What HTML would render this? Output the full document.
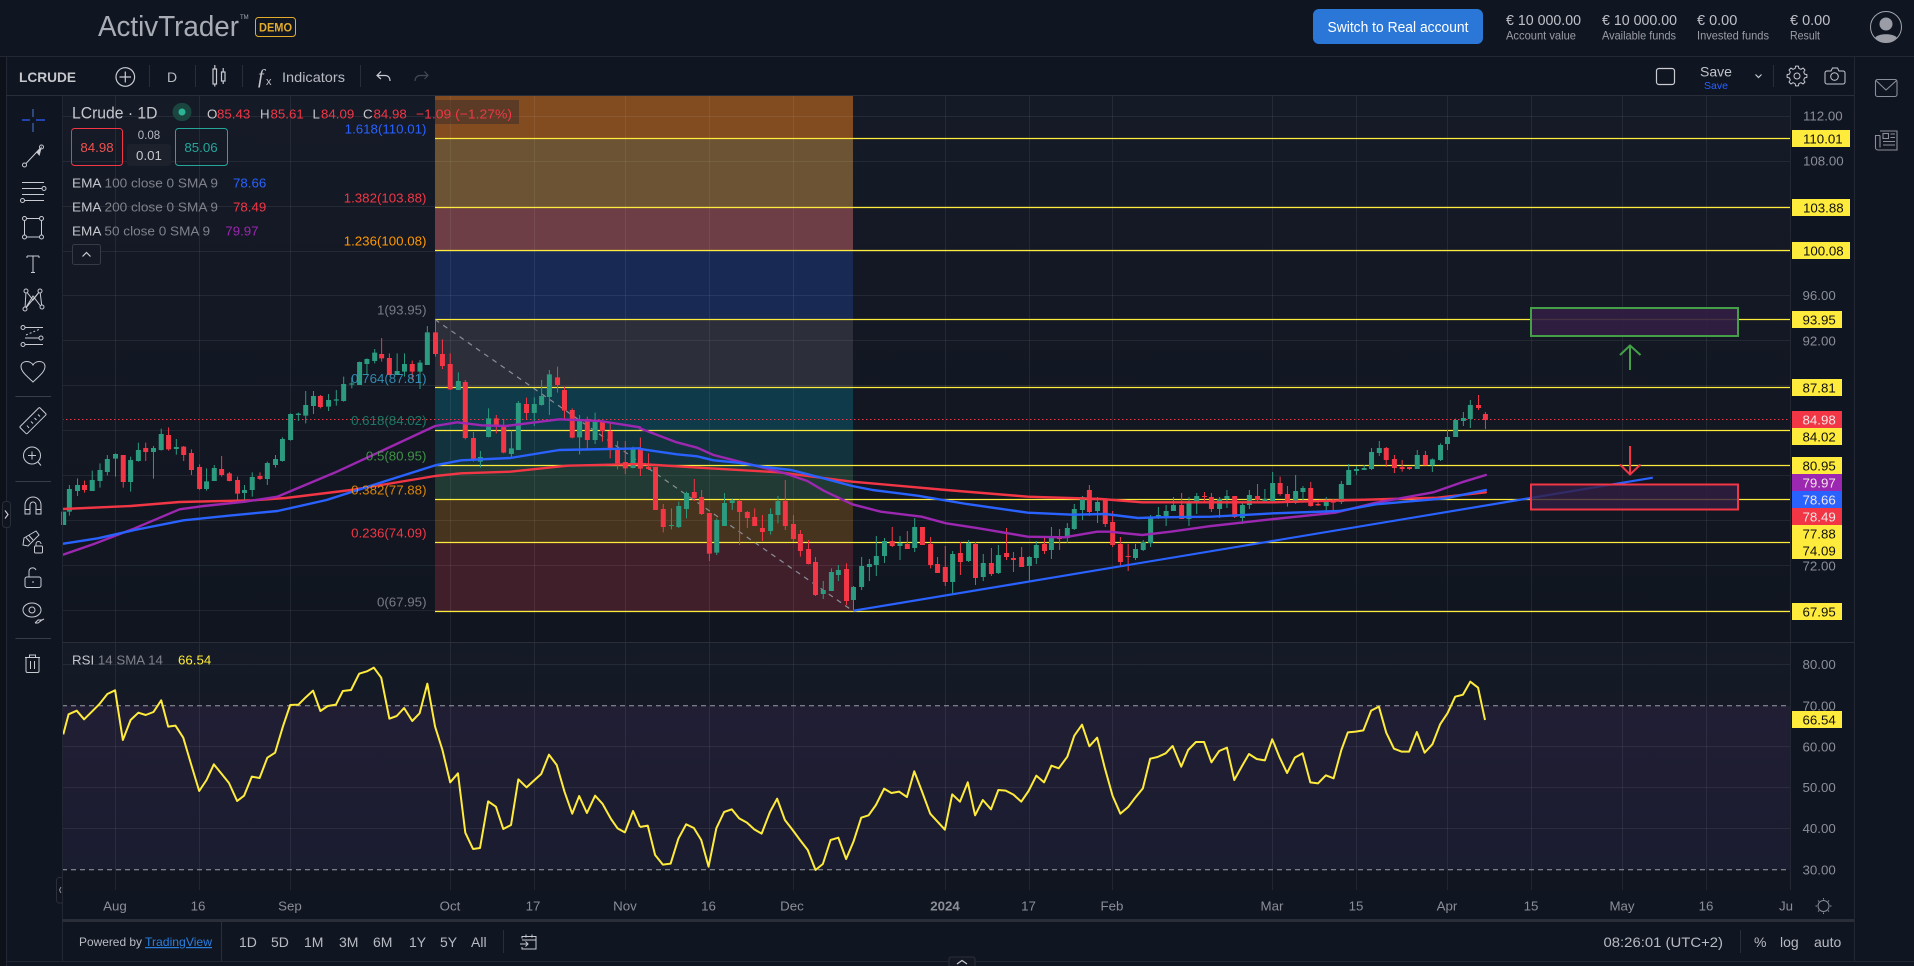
<!DOCTYPE html>
<html><head><meta charset="utf-8"><title>ActivTrader</title>
<style>
html,body{margin:0;padding:0;background:#101522;width:1914px;height:966px;overflow:hidden}
svg{display:block;font-family:"Liberation Sans",sans-serif;filter:blur(.3px)}
.n{vector-effect:non-scaling-stroke;fill:none}
.i{fill:none;stroke:#c9cbd1;stroke-width:1.2}
.ax{font-size:13.3px;fill:#8b8e97}
.t{font-size:13.3px;fill:#8b8e97;text-anchor:middle}
.fib{font-size:13.3px;text-anchor:end}
.lb{font-size:13.3px;fill:#111}
.lw{font-size:13.3px;fill:#f3e6e8}
.g{stroke:rgba(255,255,255,.07);stroke-width:1;fill:none}
.y{stroke:#ffeb3b;stroke-width:1.3;fill:none}
.tb{font-size:14px;fill:#b9bbc2}
.r{fill:#f23645}
.c{fill:#c5c7cc}
.gr{fill:#7f828b}
</style></head><body>
<svg width="1914" height="966" viewBox="0 0 1914 966" xmlns="http://www.w3.org/2000/svg">
<defs>
<linearGradient id="bg" x1="0" y1="0" x2="0" y2="1"><stop offset="0" stop-color="#151a27"/><stop offset="1" stop-color="#10151f"/></linearGradient>
<linearGradient id="rb" x1="0" y1="0" x2="0" y2="1"><stop offset="0" stop-color="#211e34"/><stop offset="1" stop-color="#1a1c30"/></linearGradient>
</defs>
<rect width="1914" height="966" fill="#101522"/>
<rect x="0" y="57" width="6.5" height="909" fill="#0d1119"/>
<rect x="62.5" y="95.5" width="1728" height="546" fill="url(#bg)"/>
<rect x="62.5" y="642.5" width="1728" height="248" fill="url(#bg)"/>

<!-- fib bands -->
<g>
<rect x="435" y="95" width="418" height="43.5" fill="#824b20"/>
<rect x="435" y="138.5" width="418" height="69" fill="#6b5333"/>
<rect x="435" y="207.5" width="418" height="43" fill="#6d3e45"/>
<rect x="435" y="250.5" width="418" height="69" fill="#182954"/>
<rect x="435" y="319.5" width="418" height="68" fill="#2c2f3a"/>
<rect x="435" y="387.5" width="418" height="43" fill="#0e3a4a"/>
<rect x="435" y="430.5" width="418" height="35" fill="#12333d"/>
<rect x="435" y="465.5" width="418" height="34" fill="#213a33"/>
<rect x="435" y="499.5" width="418" height="43" fill="#46341f"/>
<rect x="435" y="542.5" width="418" height="69" fill="#401f2b"/>
</g>
<!-- rsi band -->
<rect x="62.5" y="705.7" width="1728" height="164" fill="url(#rb)"/>

<!-- grid -->
<path class="g" d="M62 116.5H1790M62 161.5H1790M62 206.5H1790M62 251.5H1790M62 295.5H1790M62 340.5H1790M62 385.5H1790M62 430.5H1790M62 475.5H1790M62 520.5H1790M62 565.5H1790M62 610.5H1790M62 664.5H1790M62 746.5H1790M62 787.5H1790M62 828.5H1790"/>
<path class="g" d="M115.5 95V890M199.5 95V890M290.5 95V890M450.5 95V890M534.5 95V890M625.5 95V890M709.5 95V890M793.5 95V890M945.5 95V890M1029.5 95V890M1112.5 95V890M1272.5 95V890M1356.5 95V890M1447.5 95V890M1531.5 95V890M1622.5 95V890M1706.5 95V890"/>

<!-- fib lines -->
<path class="y" d="M435 138.5H1790M435 207.5H1790M435 250.5H1790M435 319.5H1790M435 387.5H1790M435 430.5H1790M435 465.5H1790M435 499.5H1790M435 542.5H1790M435 611.5H1790"/>
<path d="M435 319.5L853 611" stroke="#8b8e97" stroke-width="1.2" stroke-dasharray="5 5" fill="none"/>
<path d="M62 419.5H1790" stroke="#f23645" stroke-width="1" stroke-dasharray="1.5 2.5" fill="none"/>

<!-- candles zoom3 -->
<g transform="translate(0,320) scale(.40816,.33333)">
<path class="n" stroke="#2b9a7e" stroke-width="1" d="M156 575V615M170 495V587M190 475V528M226 452V513M245 430V503M263 405V466M283 400V470M320 410V515M339 368V425M376 378V476M395 326V392M432 357V404M506 445V512M525 435V483M599 495V548M618 457V530M655 425V495M675 405V443M692 352V425M712 280V362M731 278V303M749 213V310M768 213V282M805 222V273M824 210V257M842 170V245M862 172V205M881 125V195M899 115V165M918 87V130M973 100V165M991 100V170M1029 120V207M1047 18V135M1123 157V210M1177 393V443M1197 265V352M1253 332V412M1270 243V390M1309 232V318M1327 180V257M1346 150V285M1420 285V403M1458 278V372M1551 380V445"/>
<path class="n" stroke="#2b9a7e" stroke-width="5" d="M156 575V615M170 507V575M190 495V513M226 480V513M245 450V483M263 417V456M283 402V416M320 420V486M339 390V423M376 384V396M395 342V390M432 381V387M506 484V507M525 444V483M599 510V519M618 471V510M655 429V477M675 417V435M692 357V423M712 282V360M731 281V285M749 255V287M768 228V258M805 240V260M824 238V242M842 192V243M862 190V194M881 126V195M899 117V132M918 98V123M973 153V165M991 132V155M1029 128V155M1047 37V135M1123 183V210M1177 411V425M1197 295V351M1253 385V402M1270 249V390M1309 252V279M1327 228V255M1346 163V231M1420 297V352M1458 305V360M1551 388V444"/>
<path class="n" stroke="#f23645" stroke-width="1" d="M207 482V518M302 405V503M357 368V423M413 322V392M450 378V423M469 388V465M489 433V510M543 408V470M562 456V484M582 470V548M637 457V480M785 225V265M935 54V125M954 100V165M1010 122V180M1067 0V110M1084 58V147M1103 100V210M1140 180V358M1160 336V425M1216 285V340M1234 297V400M1290 233V297M1366 140V218M1383 200V295M1402 265V355M1439 290V387M1476 305V365M1495 310V415M1513 363V448M1532 363V462"/>
<path class="n" stroke="#f23645" stroke-width="5" d="M207 495V510M302 405V486M357 384V396M413 345V388M450 380V405M469 399V450M489 441V507M543 447V465M562 460V483M582 480V521M637 468V477M785 228V261M935 102V115M954 114V165M1010 132V155M1067 37V102M1084 102V138M1103 132V208M1140 186V354M1160 354V418M1216 295V318M1234 316V398M1290 252V279M1366 172V195M1383 210V272M1402 270V353M1439 297V360M1476 305V333M1495 333V390M1513 387V430M1532 426V445"/>
</g>
<!-- candles zoom4 -->
<g transform="translate(640,320) scale(.40816,.33333)">
<path class="n" stroke="#2b9a7e" stroke-width="1" d="M77 565V628M95 545V624M114 515V595M188 595V705M207 519V618M226 535V570M320 565V644M338 528V610M449 783V837M469 745V813M486 735V783M523 798V870M543 711V810M562 717V783M579 648V768M599 654V729M637 648V720M673 594V696M766 693V825M805 660V726M841 702V783M878 675V762M954 708V783M971 663V732M1008 621V717M1047 609V669M1064 552V630M1084 528V600M1121 531V609M1214 672V720M1233 660V693M1251 585V681M1270 561V597M1289 555V618M1307 531V573M1345 531V618M1364 519V582M1420 531V594M1438 510V564M1476 546V612M1493 510V567M1531 507V543M1550 456V546"/>
<path class="n" stroke="#2b9a7e" stroke-width="5" d="M77 615V618M95 558V621M114 519V567M188 600V698M207 549V618M226 541V549M320 582V633M338 543V585M449 810V822M469 756V813M486 750V765M523 801V840M543 738V801M562 732V741M579 708V735M599 663V708M637 669V678M673 621V684M766 702V786M805 669V723M841 729V771M878 705V759M954 711V738M971 675V714M1008 648V690M1047 624V654M1064 567V627M1084 531V570M1121 546V573M1214 687V714M1233 666V690M1251 591V669M1270 585V594M1289 573V588M1307 555V573M1345 549V597M1364 528V549M1420 537V567M1438 528V537M1476 555V594M1493 525V555M1531 537V543M1550 489V543"/>
<path class="n" stroke="#f23645" stroke-width="1" d="M1 353V468M21 400V450M38 441V570M57 552V637M133 477V543M151 510V585M170 580V723M244 538V675M263 573V624M281 565V618M300 585V663M356 480V630M376 585V665M393 630V710M413 660V733M430 711V828M506 730V855M618 621V681M655 633V687M692 621V675M712 651V745M729 711V759M748 678V798M785 666V765M822 666V795M861 684V768M898 624V720M915 696V756M935 681V741M991 648V702M1028 627V690M1101 495V588M1140 534V621M1158 573V681M1177 651V741M1196 672V753M1327 519V597M1383 516V546M1400 519V576M1457 528V594M1513 492V543"/>
<path class="n" stroke="#f23645" stroke-width="5" d="M1 384V446M21 441V447M38 441V570M57 567V621M133 516V534M151 531V582M170 579V701M244 543V576M263 576V594M281 591V618M300 624V636M356 543V618M376 612V657M393 642V693M413 687V732M430 726V825M506 747V843M618 663V678M655 672V687M692 621V675M712 672V735M729 732V759M748 741V786M785 699V726M822 672V774M861 729V762M898 699V711M915 714V720M935 711V741M991 672V693M1028 648V657M1101 510V576M1140 540V612M1158 606V675M1177 672V726M1196 708V711M1327 555V597M1383 528V531M1400 531V567M1457 528V591M1513 528V540"/>
</g>
<!-- candles zoom5 -->
<g transform="translate(1274,320) scale(.40816,.33333)">
<path class="n" stroke="#2b9a7e" stroke-width="1" d="M53 465V552M71 498V546M128 531V585M165 483V552M183 432V495M202 438V465M221 435V450M239 384V450M258 363V408M351 390V447M388 415V456M408 370V423M425 330V390M445 296V351M464 276V318M481 240V324"/>
<path class="n" stroke="#2b9a7e" stroke-width="5" d="M53 513V549M71 504V516M128 540V558M165 492V546M183 450V495M202 447V453M221 444V450M239 396V447M258 384V399M351 405V447M388 418V436M408 375V420M425 351V372M445 300V351M464 294V303M481 255V297"/>
<path class="n" stroke="#f23645" stroke-width="1" d="M15 470V527M33 498V560M90 486V560M108 546V558M145 537V570M275 381V441M295 405V459M314 420V455M332 441V450M371 393V436M501 225V270M518 276V327"/>
<path class="n" stroke="#f23645" stroke-width="5" d="M15 489V522M33 522V546M90 504V558M108 552V556M145 544V548M275 384V420M295 417V444M314 441V447M332 441V447M371 405V436M501 255V264M518 282V300"/>
</g>

<!-- EMAs -->
<g stroke-linejoin="round" stroke-linecap="round">
<g transform="translate(0,320) scale(.40816,.33333)">
<path class="n" stroke="#f23645" stroke-width="2.4" d="M155 567L320 558 440 546 620 541 700 534 860 510 1066 468 1130 460 1250 455 1390 437 1568 432"/>
<path class="n" stroke="#9c27b0" stroke-width="2.4" d="M155 704L230 672 330 625 440 568 500 558 600 545 680 530 820 458 940 390 1066 318 1120 307 1180 316 1240 318 1370 298 1470 303 1568 322"/>
<path class="n" stroke="#2962ff" stroke-width="2.4" d="M155 671L240 655 330 630 450 601 560 587 680 573 800 540 940 485 1066 436 1130 421 1250 414 1370 390 1568 385"/>
</g>
<g transform="translate(640,320) scale(.40816,.33333)">
<path class="n" stroke="#f23645" stroke-width="2.4" d="M0 432L170 445 340 457 520 485 750 510 950 530 1130 537 1230 547 1553 547"/>
<path class="n" stroke="#9c27b0" stroke-width="2.4" d="M0 325L90 367 140 383 180 405 250 427 350 458 410 483 450 512 520 553 590 575 690 590 750 610 830 625 950 650 1040 652 1120 635 1150 635 1230 645 1300 635 1400 618 1553 597"/>
<path class="n" stroke="#2962ff" stroke-width="2.4" d="M0 387L90 403 140 409 180 421 240 428 300 440 370 450 440 472 520 498 570 510 680 527 800 552 950 578 1060 584 1140 582 1220 594 1270 592 1400 590 1553 580"/>
</g>
<g transform="translate(1274,320) scale(.40816,.33333)">
<path class="n" stroke="#f23645" stroke-width="2.4" d="M0 547L200 540 400 533 519 517"/>
<path class="n" stroke="#9c27b0" stroke-width="2.4" d="M0 597L150 578 250 548 390 517 460 487 519 465"/>
<path class="n" stroke="#2962ff" stroke-width="2.4" d="M0 580L160 573 250 553 420 535 519 510"/>
</g>
</g>

<!-- trend line -->
<path d="M853.5 610.7L1652.8 477.7" stroke="#2962ff" stroke-width="2.2" fill="none"/>

<!-- boxes -->
<rect x="1531" y="308" width="207" height="28" fill="#331e42" fill-opacity=".9" stroke="#43a047" stroke-width="2"/>
<rect x="1531" y="484.5" width="207" height="25" fill="#331e42" fill-opacity=".8" stroke="#f23645" stroke-width="2"/>
<path d="M1630 370V346M1620 355L1630 345.5 1640.5 355" stroke="#43a047" stroke-width="2" fill="none"/>
<path d="M1630 446V474M1620 464.5L1630 474.5 1640.5 464.5" stroke="#f23645" stroke-width="2" fill="none"/>

<!-- OHLC box -->
<rect x="435" y="100" width="84" height="24" fill="#20242f" fill-opacity=".4"/>

<!-- fib labels -->
<text class="fib" x="426.5" y="133.5" fill="#2962ff">1.618(110.01)</text>
<text class="fib" x="426.5" y="202.5" fill="#f23645">1.382(103.88)</text>
<text class="fib" x="426.5" y="245.5" fill="#ff9800">1.236(100.08)</text>
<text class="fib" x="426.5" y="314.5" fill="#787b86">1(93.95)</text>
<text class="fib" x="426.5" y="383" fill="#3a9fc9" fill-opacity=".85">0.764(87.81)</text>
<text class="fib" x="426.5" y="425" fill="#1f8a70" fill-opacity=".85">0.618(84.02)</text>
<text class="fib" x="426.5" y="460.5" fill="#4caf50" fill-opacity=".8">0.5(80.95)</text>
<text class="fib" x="426.5" y="494.5" fill="#ff9800" fill-opacity=".85">0.382(77.88)</text>
<text class="fib" x="426.5" y="537.5" fill="#f23645">0.236(74.09)</text>
<text class="fib" x="426.5" y="606.5" fill="#787b86">0(67.95)</text>

<!-- RSI -->
<path d="M62 705.7H1790M62 869.7H1790" stroke="#9a9ca3" stroke-width="1" stroke-dasharray="5 4" fill="none"/>
<g stroke-linejoin="round">
<path transform="translate(0,640) scale(.40816,.33333)" class="n" stroke="#ffeb3b" stroke-width="2" d="M155 283L168 223 188 212 206 238 225 215 243 193 263 162 282 151 301 300 320 240 339 218 357 225 376 216 395 181 412 260 430 257 449 293 468 372 488 453 506 420 524 373 542 400 561 429 581 483 598 467 617 410 636 414 655 353 674 338 693 260 711 195 731 194 749 172 767 152 785 213 803 198 823 194 840 153 860 150 880 101 899 94 916 83 934 113 954 236 972 228 990 204 1010 243 1028 220 1047 131 1066 260 1084 330 1103 427 1122 400 1140 578 1159 627 1176 624 1196 484 1215 500 1233 567 1252 555 1270 418 1290 442 1308 422 1326 402 1345 344 1364 375 1383 455 1402 521 1419 468 1438 519 1458 467 1476 491 1497 537 1513 565 1531 577 1551 513 1568 561"/>
<path transform="translate(640,640) scale(.40816,.33333)" class="n" stroke="#ffeb3b" stroke-width="2" d="M0 561L19 557 37 645 56 674 75 671 94 596 113 553 132 564 150 600 168 680 187 565 206 516 225 508 243 535 262 548 280 568 298 581 318 517 336 476 355 540 374 570 392 600 411 630 430 690 448 672 467 600 486 593 505 657 523 605 542 533 560 526 578 495 598 446 616 459 635 455 654 471 672 394 691 455 711 521 729 545 747 569 765 463 784 485 803 427 821 526 840 480 860 508 878 450 896 452 915 464 934 485 952 453 971 407 990 427 1008 377 1026 385 1047 350 1064 287 1083 254 1101 319 1120 293 1139 385 1158 468 1177 521 1196 501 1214 472 1232 445 1250 356 1268 351 1288 340 1305 318 1326 380 1343 330 1362 306 1382 306 1400 367 1419 333 1438 323 1456 420 1475 378 1492 342 1511 357 1531 361 1549 298 1553 310"/>
<path transform="translate(1274,640) scale(.40816,.33333)" class="n" stroke="#ffeb3b" stroke-width="2" d="M0 310L13 350 32 399 51 353 70 340 89 427 108 430 127 406 146 415 165 330 181 277 200 275 219 271 238 212 257 200 275 278 294 326 313 335 331 335 350 276 369 338 388 313 407 253 425 220 444 170 463 164 481 125 500 143 517 240"/>
</g>

<!-- structural lines -->
<path d="M0 56.5H1914" stroke="#232733"/>
<path d="M6.5 57V966M62.5 95V961M1854.5 57V961M1790.5 95V890" stroke="#232733" fill="none"/>
<path d="M6 95.5H1854M62 642.5H1854" stroke="#2a2e39" fill="none"/>
<rect x="62" y="919" width="1792" height="3" fill="#2a2e39"/>
<path d="M6 961.5H1914" stroke="#232733"/>

<!-- axis labels -->
<g class="ax">
<text x="1803" y="120.5">112.00</text><text x="1803" y="165.5">108.00</text><text x="1802.5" y="300">96.00</text><text x="1802.5" y="345.5">92.00</text><text x="1802.5" y="570.5">72.00</text>
<text x="1802.5" y="669">80.00</text><text x="1802.5" y="710.5">70.00</text><text x="1802.5" y="751.5">60.00</text><text x="1802.5" y="792">50.00</text><text x="1802.5" y="833">40.00</text><text x="1802.5" y="874.5">30.00</text>
</g>
<g fill="#ffeb3b">
<rect x="1792" y="130" width="58" height="17"/><rect x="1792" y="199" width="58" height="17"/><rect x="1792" y="242" width="58" height="17"/>
<rect x="1792" y="311" width="50" height="17"/><rect x="1792" y="379" width="50" height="17"/><rect x="1792" y="428" width="50" height="17"/><rect x="1792" y="457" width="50" height="17"/><rect x="1792" y="525" width="50" height="17"/><rect x="1792" y="542" width="50" height="17"/><rect x="1792" y="603" width="50" height="17"/><rect x="1792" y="711" width="50" height="17"/>
</g>
<rect x="1792" y="411" width="50" height="17" fill="#f23645"/>
<rect x="1792" y="474" width="50" height="17" fill="#9c27b0"/>
<rect x="1792" y="491" width="50" height="17" fill="#2962ff"/>
<rect x="1792" y="508" width="50" height="17" fill="#f23645"/>
<text class="lb" x="1803" y="143.3">110.01</text><text class="lb" x="1803" y="212.3">103.88</text><text class="lb" x="1803" y="255.3">100.08</text>
<text class="lb" x="1802.5" y="324.3">93.95</text><text class="lb" x="1802.5" y="392.3">87.81</text><text class="lb" x="1802.5" y="441.3">84.02</text><text class="lb" x="1802.5" y="470.3">80.95</text><text class="lb" x="1802.5" y="538.3">77.88</text><text class="lb" x="1802.5" y="555.3">74.09</text><text class="lb" x="1802.5" y="616.3">67.95</text><text class="lb" x="1802.5" y="724.3">66.54</text>
<text class="lw" x="1802.5" y="424.3">84.98</text><text class="lw" x="1802.5" y="487.3">79.97</text><text class="lw" x="1802.5" y="504.3">78.66</text><text class="lw" x="1802.5" y="521.3">78.49</text>

<!-- time axis -->
<g class="t">
<text x="115" y="910.5">Aug</text><text x="198" y="910.5">16</text><text x="290" y="910.5">Sep</text><text x="450" y="910.5">Oct</text><text x="533" y="910.5">17</text><text x="625" y="910.5">Nov</text><text x="708.5" y="910.5">16</text><text x="792" y="910.5">Dec</text><text x="945" y="910.5" font-weight="bold">2024</text><text x="1028.5" y="910.5">17</text><text x="1112" y="910.5">Feb</text><text x="1272" y="910.5">Mar</text><text x="1356" y="910.5">15</text><text x="1447" y="910.5">Apr</text><text x="1531" y="910.5">15</text><text x="1622" y="910.5">May</text><text x="1706" y="910.5">16</text><text x="1786" y="910.5">Ju</text>
</g>
<g class="i" style="stroke:#8b8e97;stroke-width:1">
<circle cx="1823.5" cy="906" r="5.5"/>
<path d="M1823.5 898V899.5M1823.5 912.5V914M1815.5 906H1817M1830 906H1831.5M1818 900.5L1819 901.5M1828 910.5L1829 911.5M1829 900.5L1828 901.5M1819 910.5L1818 911.5"/>
</g>

<!-- header -->
<text x="98" y="36" font-size="29" fill="#a9acb4" textLength="141" lengthAdjust="spacingAndGlyphs">ActivTrader</text>
<text x="240" y="19" font-size="6" fill="#a9acb4">TM</text>
<rect x="255.5" y="17.5" width="40" height="19" rx="3" fill="none" stroke="#e3ab2c"/>
<text x="259" y="31.5" font-size="12" font-weight="bold" fill="#e3ab2c" textLength="33" lengthAdjust="spacingAndGlyphs">DEMO</text>
<rect x="1313" y="9" width="170" height="35" rx="6" fill="#2b77d8"/>
<text x="1327.5" y="32" font-size="14.5" fill="#fff" textLength="141" lengthAdjust="spacingAndGlyphs">Switch to Real account</text>
<g fill="#bfc1c7" font-size="14.5">
<text x="1506" y="25" textLength="75" lengthAdjust="spacingAndGlyphs">€ 10 000.00</text>
<text x="1602" y="25" textLength="75" lengthAdjust="spacingAndGlyphs">€ 10 000.00</text>
<text x="1697" y="25">€ 0.00</text>
<text x="1790" y="25">€ 0.00</text>
</g>
<g fill="#9a9da5" font-size="12">
<text x="1506" y="39.5" textLength="70" lengthAdjust="spacingAndGlyphs">Account value</text>
<text x="1602" y="39.5" textLength="74" lengthAdjust="spacingAndGlyphs">Available funds</text>
<text x="1697" y="39.5" textLength="72" lengthAdjust="spacingAndGlyphs">Invested funds</text>
<text x="1790" y="39.5" textLength="30" lengthAdjust="spacingAndGlyphs">Result</text>
</g>
<circle cx="1886" cy="27" r="15.5" fill="none" stroke="#a3a6ad" stroke-width="1"/>
<circle cx="1886" cy="24" r="6.5" fill="#9a9da5"/>
<path d="M1875 38C1877 33 1895 33 1897 38C1894 41 1890 42.5 1886 42.5C1882 42.5 1878 41 1875 38Z" fill="#9a9da5"/>

<!-- toolbar -->
<text x="19" y="82" font-size="14" font-weight="bold" fill="#c5c7cc" textLength="57" lengthAdjust="spacingAndGlyphs">LCRUDE</text>
<circle class="i" cx="125.3" cy="77" r="9.3"/>
<path class="i" d="M119.5 77H131M125.3 71.5V82.5"/>
<path d="M149.5 65V87M195.5 65V87M242.5 65V87M360.5 65V87M1773.5 65V87" stroke="#2a2e39"/>
<text x="172" y="82" font-size="14" fill="#b9bbc2" text-anchor="middle">D</text>
<g class="i">
<rect x="213" y="69" width="3.5" height="15"/><path d="M214.8 65V69M214.8 84V86.5"/>
<rect x="221.5" y="72" width="3.5" height="9"/><path d="M223.2 68V72M223.2 81V84"/>
</g>
<text x="258" y="83" font-size="20" font-style="italic" font-family="Liberation Serif,serif" fill="#c5c7cc">f</text>
<text x="266" y="85" font-size="11" fill="#c5c7cc">x</text>
<text x="282" y="82" class="tb" textLength="63" lengthAdjust="spacingAndGlyphs">Indicators</text>
<path class="i" d="M381 71.5L377 75.5 381 79M377 75.5H385C388 75.5 390 77.5 390 81"/>
<path d="M424.5 71.5L428 75.5 424.5 79M428 75.5H420C417.5 75.5 415 77.5 415 81" fill="none" stroke="#454955" stroke-width="1.2"/>
<rect class="i" x="1656.5" y="68.5" width="18" height="16" rx="2.5"/>
<text x="1716" y="76.5" font-size="14" fill="#c0c2c8" text-anchor="middle">Save</text>
<text x="1716" y="89" font-size="10.5" fill="#2962ff" text-anchor="middle">Save</text>
<path class="i" d="M1755.5 74.5L1758.5 77.5 1761.5 74.5"/>
<g class="i" style="stroke-width:1">
<circle cx="1797" cy="76" r="3"/>
<path transform="translate(1797,76)" d="M7.57 1.89L9.9 1.39 9.9-1.39 7.57-1.89 6.69-4.02 7.98-6.02 6.02-7.98 4.02-6.69 1.89-7.57 1.39-9.9-1.39-9.9-1.89-7.57-4.02-6.69-6.02-7.98-7.98-6.02-6.69-4.02-7.57-1.89-9.9-1.39-9.9 1.39-7.57 1.89-6.69 4.02-7.98 6.02-6.02 7.98-4.02 6.69-1.89 7.57-1.39 9.9 1.39 9.9 1.89 7.57 4.02 6.69 6.02 7.98 7.98 6.02 6.69 4.02Z" stroke-linejoin="round"/>
<path d="M1825 73a2 2 0 0 1 2-2h4l1.5-3h5l1.5 3h4a2 2 0 0 1 2 2v9a2 2 0 0 1-2 2h-16a2 2 0 0 1-2-2z"/>
<circle cx="1834.5" cy="76.5" r="3.8"/>
</g>
<g fill="none" stroke="#8b8e97" stroke-width="1.1">
<rect x="1875.5" y="79.5" width="21.5" height="17" rx="2"/><path d="M1876 80.5L1886 90 1896.5 80.5"/>
<path d="M1880 131h17v19h-19a2.5 2.5 0 0 1-2.5-2.5v-12h4.5M1880 135.5v12"/>
<rect x="1883" y="133.5" width="5.5" height="5"/>
<path d="M1890.5 134h4.5M1890.5 137.5h4.5M1883 141.5h12M1883 145h12"/>
</g>

<!-- legend -->
<rect x="172.5" y="103" width="19" height="18" rx="9" fill="#1b4640"/>
<circle cx="182" cy="112" r="3.5" fill="#2bb596"/>
<text x="72" y="118.5" font-size="17" class="c" textLength="85.5" lengthAdjust="spacingAndGlyphs">LCrude · 1D</text>
<g font-size="13.3">
<text x="207" y="118.5" class="c">O</text><text x="217" y="118.5" class="r">85.43</text>
<text x="260" y="118.5" class="c">H</text><text x="270.5" y="118.5" class="r">85.61</text>
<text x="312.5" y="118.5" class="c">L</text><text x="321" y="118.5" class="r">84.09</text>
<text x="363" y="118.5" class="c">C</text><text x="373.5" y="118.5" class="r">84.98</text>
<text x="416" y="118.5" class="r" textLength="96" lengthAdjust="spacingAndGlyphs">−1.09 (−1.27%)</text>
</g>
<rect x="71.5" y="128.5" width="51" height="37" rx="3" fill="none" stroke="#f23645"/>
<text x="97" y="152" font-size="13.3" fill="#ef5350" text-anchor="middle">84.98</text>
<rect x="175.5" y="128.5" width="52" height="37" rx="3" fill="none" stroke="#26a69a"/>
<text x="201" y="152" font-size="13.3" fill="#26a69a" text-anchor="middle">85.06</text>
<rect x="127" y="144" width="44" height="22" rx="3" fill="#1c212c"/>
<text x="149" y="139" font-size="11.5" fill="#b9bbc2" text-anchor="middle">0.08</text>
<text x="149" y="160" font-size="13.3" fill="#c5c7cc" text-anchor="middle">0.01</text>
<g font-size="13.3">
<text x="72" y="187.5" class="c" textLength="146" lengthAdjust="spacingAndGlyphs">EMA <tspan class="gr">100 close 0 SMA 9</tspan></text><text x="233" y="187.5" fill="#2962ff">78.66</text>
<text x="72" y="211.5" class="c" textLength="146" lengthAdjust="spacingAndGlyphs">EMA <tspan class="gr">200 close 0 SMA 9</tspan></text><text x="233" y="211.5" fill="#f23645">78.49</text>
<text x="72" y="235.5" class="c" textLength="138" lengthAdjust="spacingAndGlyphs">EMA <tspan class="gr">50 close 0 SMA 9</tspan></text><text x="225.3" y="235.5" fill="#9c27b0">79.97</text>
</g>
<rect x="72.5" y="244.5" width="28" height="20" rx="2" fill="#141925" stroke="#363a45"/>
<path class="i" d="M82.5 256.5L86.5 252.5 90.5 256.5"/>
<text x="72" y="664.5" font-size="13.3" class="c">RSI <tspan class="gr">14 SMA 14</tspan></text>
<text x="178" y="664.5" font-size="13.3" fill="#ffeb3b">66.54</text>

<!-- left toolbar icons -->
<path d="M22 120H30M36 120H45" stroke="#2962ff" stroke-width="1.3"/>
<path d="M33 109V117M33 123V132" stroke="#4a7bd8" stroke-width="1"/>
<g class="i" style="stroke-width:1">
<circle cx="24.5" cy="165" r="2"/><circle cx="41.5" cy="147" r="2"/><path d="M26 163.5L40 148.5"/>
<path d="M22 182.5H44M22 188.5H42M22 194.5H44M24 200.5H44"/><circle cx="44" cy="188.5" r="2"/><circle cx="22.5" cy="200.5" r="2"/>
<rect x="24.5" y="218.5" width="17" height="18.5"/>
<circle cx="24.5" cy="218.5" r="2" fill="#101522"/><circle cx="41.5" cy="218.5" r="2" fill="#101522"/><circle cx="24.5" cy="237" r="2" fill="#101522"/><circle cx="41.5" cy="237" r="2" fill="#101522"/>
<path d="M27 256H39M27 256V258M39 256V258M33 256V272.5M31 272.5H35"/>
<path d="M26 291L25 309 33 296 42 308 40 291 33 300 26 291M25 309L40 291"/>
<circle cx="26" cy="291" r="2" fill="#101522"/><circle cx="40" cy="291" r="2" fill="#101522"/><circle cx="25" cy="309" r="2" fill="#101522"/><circle cx="42" cy="307" r="2" fill="#101522"/>
<path d="M25 327.5H43M25 338H39M25 344.5H43"/>
<path d="M26 335L40 329" stroke-dasharray="2 2"/>
<circle cx="23" cy="327.5" r="2"/><circle cx="41" cy="338" r="2"/><circle cx="23" cy="344.5" r="2"/>
<path d="M33 382C28 377 21 372 21 366.5C21 362.5 24.5 361.5 27 361.5C29.5 361.5 32 363 33 365C34 363 36.5 361.500 39 361.5C41.5 361.5 45 362.5 45 366.5C45 372 38 377 33 382Z"/>
<rect x="19" y="415.7" width="28" height="10" rx="1" transform="rotate(-45 33 420.7)"/>
<path d="M27 425.500L29 428M31 421.500L33 423.500M34.500 418L36.500 420M38 414.500L40 416.500"/>
<circle cx="32" cy="455.500" r="8.500"/><path d="M28 455.500H36M32 451.500V459.500M38 462L41 465.500"/>
<path d="M25 514V505A8 8 0 0 1 41 505V514H36V505A3 3 0 0 0 30 505V514ZM25 509.500H30M36 509.500H41"/>
<path d="M23 545L24 538 36 531 39 535 28 546ZM26 537.500L30 542M29 535.500L33 540"/>
<rect x="34.500" y="546" width="8" height="7" rx="1"/><path d="M36 546V544A2.500 2.500 0 0 1 41 544"/>
<rect x="25" y="577" width="16" height="10.500" rx="2"/><path d="M29 577V571A3.700 3.700 0 0 1 36 570"/><path d="M33 581V583"/>
<ellipse cx="32" cy="610" rx="9" ry="7"/><circle cx="32" cy="610" r="3"/>
<path d="M35 623L38 620 42 620 38 623 35 623M40 621L44 619"/>
<path d="M26 657.500H39V671A1.500 1.500 0 0 1 37.500 672.500H27.500A1.500 1.500 0 0 1 26 671ZM25 657.500H40M29.500 657.500V655H35.500V657.500M30.500 661V669M34.500 661V669"/>
</g>
<path d="M15.500 396.500H51M15.500 481.500H51M15.500 638.500H51" stroke="#3a3e49"/>
<path d="M36 153L42 146 39.500 156 37 153Z" fill="#c9cbd1"/>

<!-- side tabs -->
<rect x="2.500" y="501.500" width="8" height="26" rx="3" fill="#10141e" stroke="#2a2e39"/>
<path class="i" d="M5 510.500L8 514.500 5 518.500"/>
<path d="M62 877.500H59A3 3 0 0 0 56.500 880.500V900A3 3 0 0 0 59 903H62" fill="#10141e" stroke="#2a2e39"/>
<path d="M61 887L59.500 890 61 893" fill="none" stroke="#8b8e97"/>
<path d="M949 966V959A2 2 0 0 1 951 957H973A2 2 0 0 1 975 959V966" fill="#131824" stroke="#2a2e39"/>
<path d="M957 964L962 960.500 967 964" fill="none" stroke="#c9cbd1" stroke-width="1.200"/>

<!-- bottom bar -->
<text x="79" y="946" font-size="12" fill="#b9bbc2" textLength="63" lengthAdjust="spacingAndGlyphs">Powered by</text>
<text x="145" y="946" font-size="12" fill="#2a7fde" text-decoration="underline" textLength="67" lengthAdjust="spacingAndGlyphs">TradingView</text>
<path d="M221.500 922V961M503.500 930V953M1740.500 930V953" stroke="#2a2e39"/>
<g class="tb">
<text x="239" y="947">1D</text><text x="271" y="947">5D</text><text x="304" y="947">1M</text><text x="339" y="947">3M</text><text x="373" y="947">6M</text><text x="409" y="947">1Y</text><text x="440" y="947">5Y</text><text x="471" y="947">All</text>
<text x="1603.500" y="947" textLength="119.500" lengthAdjust="spacingAndGlyphs">08:26:01 (UTC+2)</text>
<text x="1754" y="947">%</text><text x="1780" y="947">log</text><text x="1814" y="947">auto</text>
</g>
<path class="i" style="stroke-width:1" d="M522 938.500V936.500H536V949H522V947M522 940H536M526 934.500V937.500M532 934.500V937.500M520 944H528M525.500 941.500L528 944 525.500 946.500"/>
</svg>
</body></html>
